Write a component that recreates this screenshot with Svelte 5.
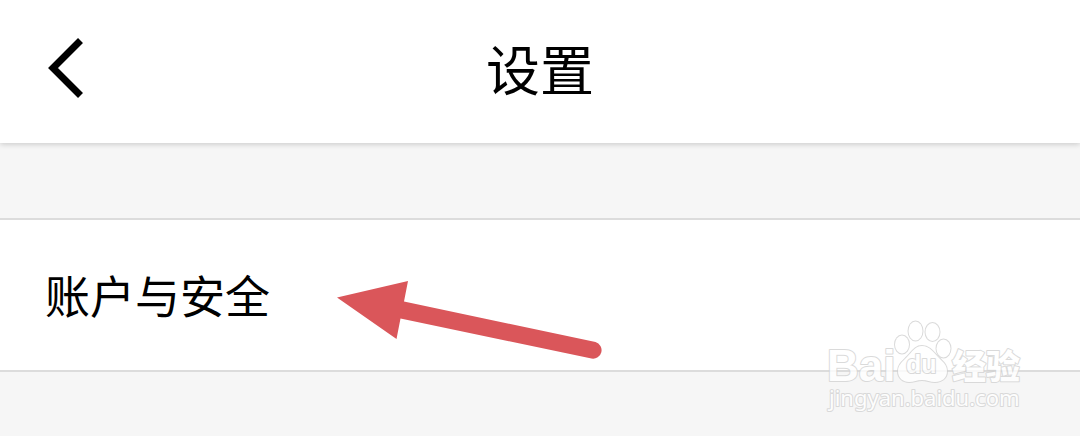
<script>
  const rows = ['账户与安全'];
</script>

<div class="page">
  <header>
    <button class="back" aria-label="返回">
      <svg width="36" height="60" viewBox="0 0 36 60" aria-hidden="true">
        <path d="M32.500 2.500 5 30l27.500 27.500" fill="none" stroke="#000" stroke-width="7" />
      </svg>
    </button>
    <h1>设置</h1>
  </header>

  <main>
    {#each rows as row}
      <button class="row">{row}</button>
    {/each}
  </main>

  <svg class="arrow" width="266" height="80" viewBox="0 0 266 80" aria-hidden="true">
    <path d="M1 17.500 72 1l-4 20.500L259.500 62a8.500 8.500 0 0 1-4 16.500L64.500 38.500 60.500 59Z" fill="#da565a" />
  </svg>

  <svg class="watermark" width="210" height="104" viewBox="0 0 210 104" aria-hidden="true">
    <g class="ink">
      <text class="brand" x="7" y="66">Bai</text>
      <ellipse cx="82" cy="29.500" rx="7" ry="9" />
      <ellipse cx="95.500" cy="16" rx="7" ry="9.500" />
      <ellipse cx="112.500" cy="17" rx="7" ry="9" />
      <ellipse cx="123.500" cy="33.500" rx="7" ry="9" />
      <path d="M102 31c-7 0-10 6-15 11-5 5-9 8-9 14 0 7 5 11 11 11 5 0 8-2 13-2s8 2 13 2c7 0 12-4 12-11 0-6-4-9-8-13-5-5-9-12-17-12Z" />
      <text class="du" x="86" y="58">du</text>
      <text class="cn" x="132" y="64">经验</text>
      <text class="site" x="9" y="91">jingyan.baidu.com</text>
    </g>
  </svg>
</div>

<style>
  :global(body) {
    margin: 0;
    background: #f6f6f6;
  }

  .page {
    position: relative;
    min-height: 100vh;
    overflow: hidden;
    background: #f6f6f6;
    color: #000;
    font-family: "Noto Sans CJK SC", sans-serif;
  }

  header {
    display: grid;
    grid-template-columns: 1fr auto 1fr;
    align-items: center;
    padding: 28px 48px 35px;
    background: #fff;
    box-shadow: 0 1px 6px rgba(0, 0, 0, 0.2);
  }

  button {
    margin: 0;
    padding: 0;
    border: 0;
    background: none;
    color: inherit;
    font: inherit;
    cursor: pointer;
  }

  .back {
    justify-self: start;
  }

  svg {
    display: block;
  }

  h1 {
    margin: 0;
    font-size: 54px;
    font-weight: 400;
    line-height: 80px;
  }

  main {
    margin-top: 75px;
    border-top: 2px solid #dcdcdc;
    background: #fff;
  }

  .row {
    display: block;
    width: 100%;
    padding: 43px 45px;
    border-bottom: 2px solid #dcdcdc;
    font-size: 45px;
    line-height: 64px;
    text-align: left;
  }

  .arrow {
    position: absolute;
    left: 336px;
    top: 280px;
    pointer-events: none;
  }

  .watermark {
    position: absolute;
    right: 50px;
    top: 315px;
    pointer-events: none;
  }

  .ink {
    opacity: 0.8;
    fill: #fff;
    stroke: #d2d2d2;
    stroke-width: 2px;
    stroke-linejoin: round;
    paint-order: stroke;
  }

  .brand {
    font: 700 44px "Liberation Sans", sans-serif;
  }

  .du {
    font: 700 25px "Liberation Sans", sans-serif;
  }

  .cn {
    font: 900 34px "Noto Sans CJK SC", sans-serif;
  }

  .site {
    font: 400 22px "Noto Sans", sans-serif;
  }
</style>
